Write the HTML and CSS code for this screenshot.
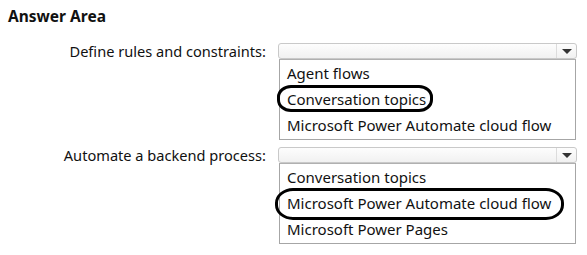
FILE: index.html
```html
<!DOCTYPE html>
<html>
<head>
<meta charset="utf-8">
<link rel="stylesheet" href="styles.css">
</head>
<body>
<div class="title">Answer Area</div>
<div class="row">
  <div class="label">Define rules and constraints:</div>
  <div class="field">
    <div class="select"><span class="btn"><span class="arrow"></span></span></div>
    <div class="list">
      <div class="item">Agent flows</div>
      <div class="item sel">Conversation topics<span class="oval oval1"></span></div>
      <div class="item">Microsoft Power Automate cloud flow</div>
    </div>
  </div>
</div>
<div class="row row2">
  <div class="label">Automate a backend process:</div>
  <div class="field">
    <div class="select"><span class="btn"><span class="arrow"></span></span></div>
    <div class="list">
      <div class="item">Conversation topics</div>
      <div class="item sel">Microsoft Power Automate cloud flow<span class="oval oval2"></span></div>
      <div class="item">Microsoft Power Pages</div>
    </div>
  </div>
</div>
</body>
</html>
```
FILE: styles.css
```css
html, body { margin: 0; padding: 0; background: #fff; }
body {
  font-family: "Noto Sans", "Open Sans", sans-serif;
  color: #111;
  width: 587px;
  height: 255px;
  overflow: hidden;
}
.title {
  font-weight: bold;
  font-size: 15.5px;
  line-height: 18px;
  padding: 7px 0 0 8px;
  height: 18px;
}
.row {
  display: grid;
  grid-template-columns: 266px 299px;
  column-gap: 12px;
  margin-top: 18px;
}
.row2 { margin-top: 7px; }
.label {
  text-align: right;
  font-size: 14.6px;
  line-height: 16px;
  height: 16px;
}
.select {
  height: 14px;
  border: 1px solid #c9c9c9;
  border-radius: 3px;
  background: linear-gradient(#fdfdfd, #f1f1f1);
  display: flex;
  justify-content: flex-end;
}
.btn {
  width: 19px;
  border-left: 1px solid #dcdcdc;
  display: flex;
  align-items: center;
  justify-content: center;
}
.arrow {
  width: 0; height: 0;
  border-left: 5px solid transparent;
  border-right: 5px solid transparent;
  border-top: 5px solid #333;
}
.list {
  margin-left: 1px;
  width: 295px;
  border: 1px solid #a6a6a6;
  border-top: 1px solid #b0b0b0;
  padding: 0 0 1px 0;
}
.item {
  position: relative;
  height: 26px;
  line-height: 26px;
  font-size: 15px;
  padding-left: 7px;
  white-space: nowrap;
}
.oval {
  position: absolute;
  border: 3.5px solid #000;
  border-radius: 14px / 12px;
  box-sizing: border-box;
}
.oval1 { left: -3px; top: -1px; width: 156px; height: 27px; }
.oval2 { left: -5px; top: -2px; width: 289px; height: 32px; border-radius: 18px / 15px; }
```
